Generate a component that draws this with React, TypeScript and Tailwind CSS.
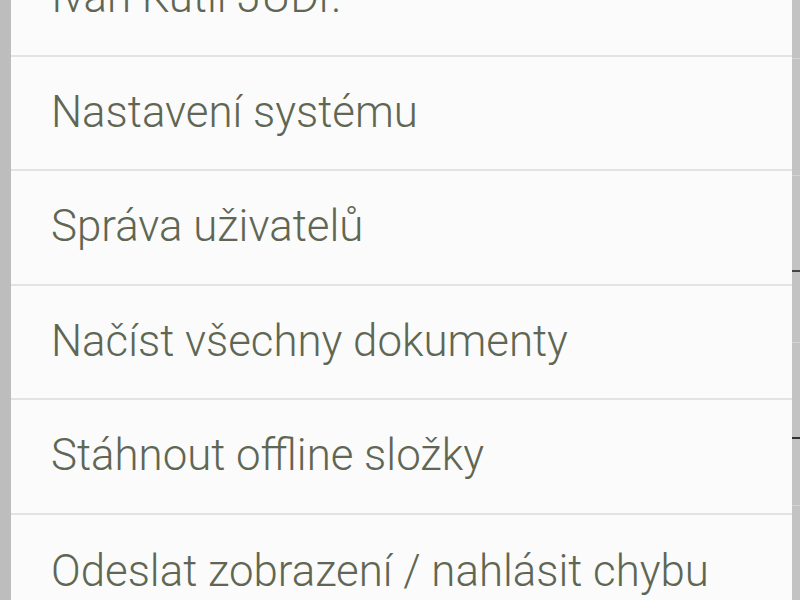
import React from "react";

const items = [
  "Ivan Kutil JUDr.",
  "Nastavení systému",
  "Správa uživatelů",
  "Načíst všechny dokumenty",
  "Stáhnout offline složky",
  "Odeslat zobrazení / nahlásit chybu",
];

const marks = [
  { h: "h-[58px]", c: "" },
  { h: "h-[117px]", c: "border-t border-[#d4d4d4]" },
  { h: "h-[95px]", c: "border-t border-[#d4d4d4]" },
  { h: "h-[72px]", c: "border-t-2 border-[#444]" },
  { h: "h-[95px]", c: "border-t border-[#d4d4d4]" },
  { h: "h-[68px]", c: "border-t-2 border-[#333]" },
  { h: "flex-1", c: "border-t border-[#d4d4d4]" },
];

export default function App() {
  return (
    <div className="w-[800px] h-[600px] overflow-hidden flex bg-[#c0c0c0]">
      <div className="w-[11px] shrink-0 bg-[#bdbdbd]" />
      <div className="flex-1 bg-[#fbfbfb] flex flex-col mt-[-58px]">
        {items.map((t, i) => (
          <div
            key={i}
            className={`h-[114.5px] shrink-0 flex items-center pl-[40px] text-[43.8px] font-light text-[#5f6754] ${
              i < items.length - 1 ? "border-b-2 border-[#e3e3e3]" : ""
            }`}
            style={{ fontFamily: "Roboto, sans-serif" }}
          >
            {t}
          </div>
        ))}
      </div>
      <div className="w-[8px] shrink-0 bg-[#c3c3c3] flex flex-col">
        {marks.map((m, i) => (
          <div key={i} className={`${m.h} shrink-0 ${m.c}`} />
        ))}
      </div>
    </div>
  );
}
